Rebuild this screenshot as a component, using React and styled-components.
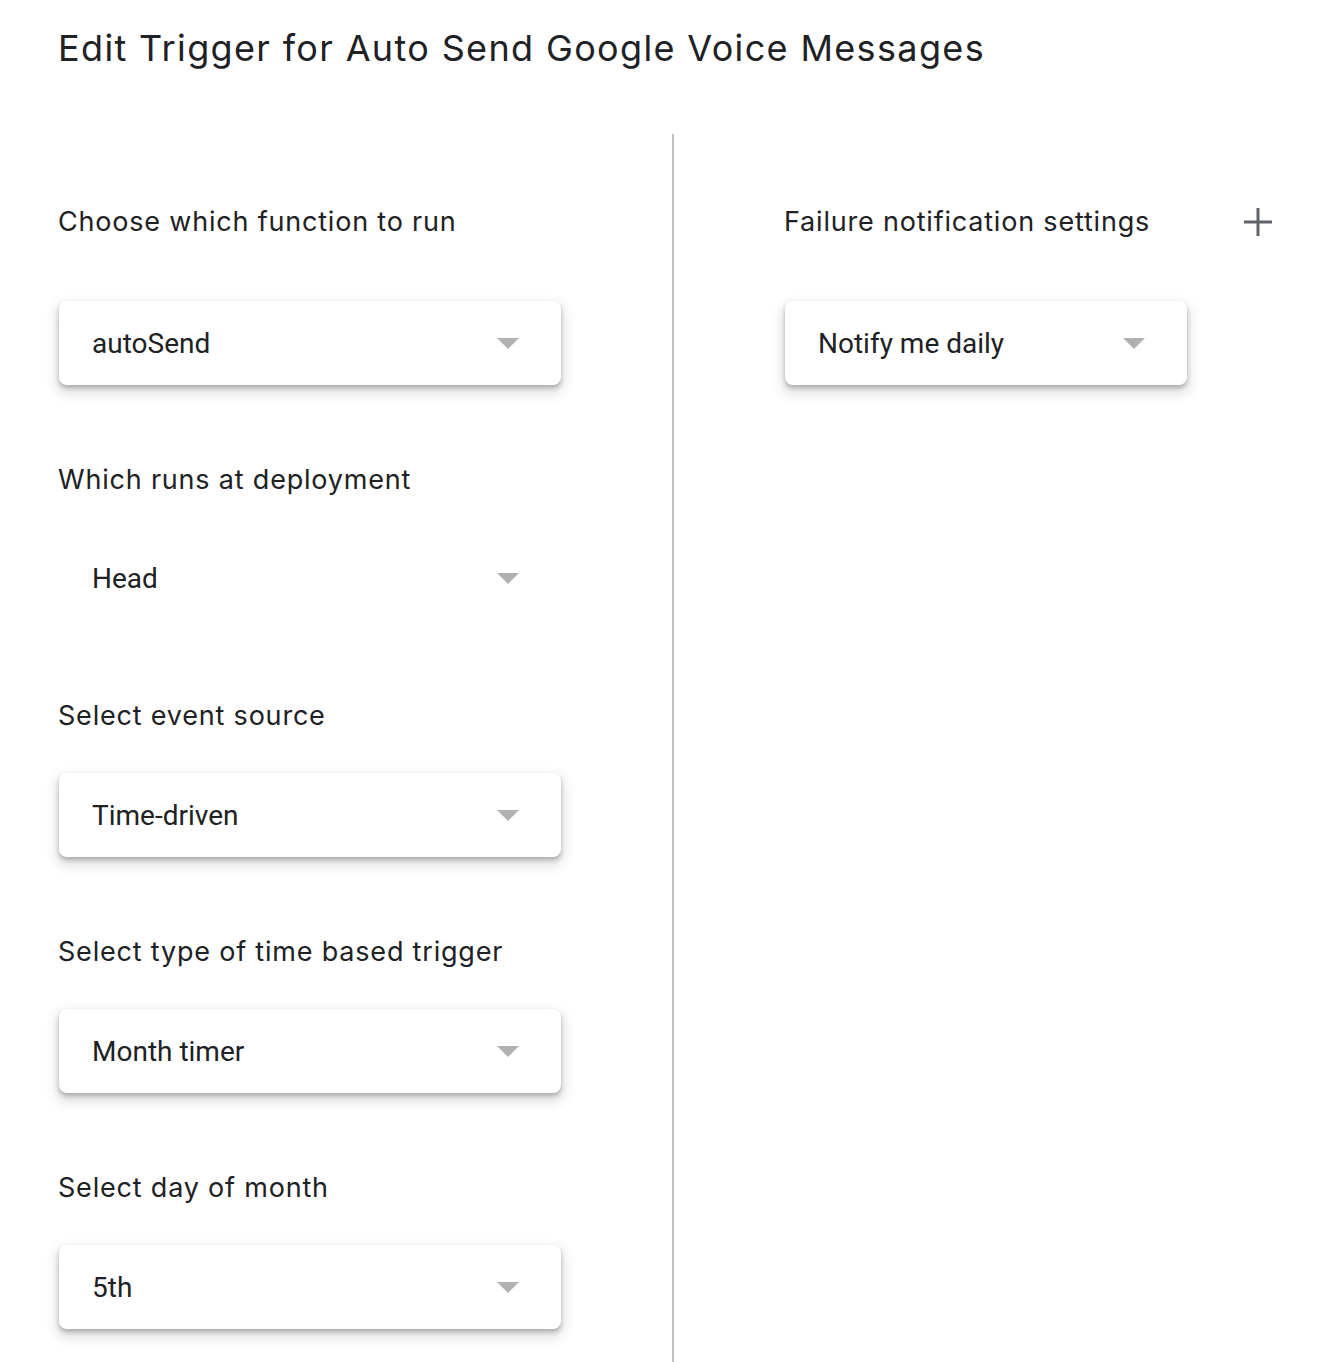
import React from 'react';
import styled, { createGlobalStyle } from 'styled-components';

const GlobalStyle = createGlobalStyle`
  html, body {
    margin: 0;
    padding: 0;
    background: #ffffff;
  }
  body {
    font-family: Roboto, "Liberation Sans", sans-serif;
    color: #202124;
  }
`;

const Page = styled.div`
  width: 1330px;
  height: 1362px;
  overflow: hidden;
  box-sizing: border-box;
  padding-left: 58px;
`;

const Title = styled.h1`
  margin: 0;
  padding-top: 26px;
  height: 134px;
  box-sizing: border-box;
  font-family: Inter, "Open Sans", sans-serif;
  font-size: 36px;
  font-weight: 400;
  line-height: 44px;
  letter-spacing: 1.35px;
  color: #202124;
`;

const Columns = styled.div`
  display: flex;
  flex-flow: row nowrap;
  height: 1228px;
`;

const LeftColumn = styled.div`
  width: 614px;
  display: flex;
  flex-flow: column nowrap;
  padding-top: 68px;
`;

const Divider = styled.div`
  width: 2px;
  height: 100%;
  background-color: #bdc1c6;
`;

const RightColumn = styled.div`
  flex: 1;
  padding-left: 110px;
  padding-right: 58px;
  padding-top: 68px;
  display: flex;
  flex-flow: column nowrap;
`;

const Section = styled.div`
  display: flex;
  flex-flow: column nowrap;
  margin-bottom: ${(p) => p.gap || 75}px;
`;

const LabelRow = styled.div`
  display: flex;
  flex-flow: row nowrap;
  align-items: center;
  justify-content: space-between;
  height: 40px;
  margin-bottom: ${(p) => p.below || 59}px;
`;

const Label = styled.span`
  font-family: Inter, "Open Sans", sans-serif;
  font-size: 27px;
  line-height: 40px;
  letter-spacing: 0.8px;
  color: #202124;
`;

const Select = styled.div`
  width: ${(p) => p.width}px;
  height: 84px;
  margin-left: 1px;
  box-sizing: border-box;
  display: flex;
  flex-flow: row nowrap;
  align-items: center;
  justify-content: space-between;
  padding: 0 42px 0 33px;
  border-radius: 8px;
  background-color: #ffffff;
  box-shadow: ${(p) =>
    p.flat
      ? 'none'
      : '0 3px 4px 0 rgba(60, 64, 67, 0.32), 0 6px 12px 3px rgba(60, 64, 67, 0.16)'};
`;

const SelectText = styled.span`
  font-family: Roboto, "Liberation Sans", sans-serif;
  font-size: 28px;
  color: #202124;
`;

const Arrow = styled.span`
  width: 0;
  height: 0;
  border-left: 11px solid transparent;
  border-right: 11px solid transparent;
  border-top: 11px solid #b0b0b0;
`;

const PlusButton = styled.svg`
  width: 30px;
  height: 30px;
  margin-right: -1px;
`;

const Dropdown = ({ value, width = 502, flat }) => (
  <Select width={width} flat={flat}>
    <SelectText>{value}</SelectText>
    <Arrow />
  </Select>
);

const App = () => (
  <Page>
    <GlobalStyle />
    <Title>Edit Trigger for Auto Send Google Voice Messages</Title>
    <Columns>
      <LeftColumn>
        <Section>
          <LabelRow>
            <Label>Choose which function to run</Label>
          </LabelRow>
          <Dropdown value="autoSend" />
        </Section>
        <Section gap={76}>
          <LabelRow below={36}>
            <Label>Which runs at deployment</Label>
          </LabelRow>
          <Dropdown value="Head" flat />
        </Section>
        <Section>
          <LabelRow below={37}>
            <Label>Select event source</Label>
          </LabelRow>
          <Dropdown value="Time-driven" />
        </Section>
        <Section>
          <LabelRow below={37}>
            <Label>Select type of time based trigger</Label>
          </LabelRow>
          <Dropdown value="Month timer" />
        </Section>
        <Section>
          <LabelRow below={37}>
            <Label>Select day of month</Label>
          </LabelRow>
          <Dropdown value="5th" />
        </Section>
      </LeftColumn>
      <Divider />
      <RightColumn>
        <Section>
          <LabelRow>
            <Label>Failure notification settings</Label>
            <PlusButton viewBox="0 0 30 30">
              <path d="M15 1v28M1 15h28" stroke="#5f6368" strokeWidth="3" fill="none" />
            </PlusButton>
          </LabelRow>
          <Dropdown value="Notify me daily" width={402} />
        </Section>
      </RightColumn>
    </Columns>
  </Page>
);

export default App;
